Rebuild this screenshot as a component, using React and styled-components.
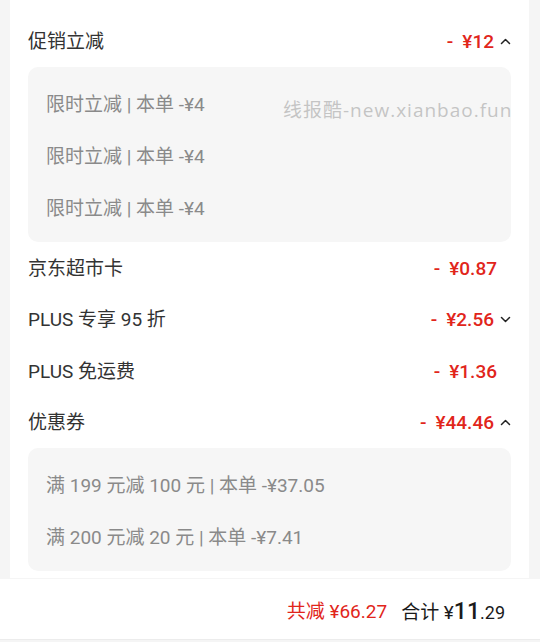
import React from "react"
import styled, { createGlobalStyle } from "styled-components"

const Global = createGlobalStyle`
  html, body { margin: 0; padding: 0; background: #f5f5f5; }
  body { font-family: Roboto, "Noto Sans CJK SC", sans-serif; }
`

const Page = styled.div`
  width: 540px;
  height: 642px;
  display: flex;
  flex-direction: column;
  background: #f5f5f5;
  position: relative;
  overflow: hidden;
`

const Card = styled.div`
  margin: 0 11px 0 10px;
  background: #fff;
  padding: 15px 18px 7px;
  display: flex;
  flex-direction: column;
`

const Row = styled.div`
  height: ${p => p.h || 51.5}px;
  flex-shrink: 0;
  display: flex;
  align-items: center;
  justify-content: space-between;
  padding-top: 1px;
  box-sizing: border-box;
`

const Label = styled.span`
  font-size: 19px;
  color: #333;
  line-height: 1;
`

const Amount = styled.span`
  display: flex;
  align-items: center;
  padding-right: ${p => (p.arrow ? 0 : 14)}px;
  font-size: 19px;
  font-weight: 500;
  color: #e1251b;
  line-height: 1;
  svg { margin-left: 6px; }
`

const Sign = styled.span`
  margin-right: 9px;
`

const Box = styled.div`
  background: #f6f6f6;
  border-radius: 10px;
  padding: 11px 18px 8px;
`

const Item = styled.div`
  height: 52px;
  display: flex;
  align-items: center;
  font-size: 19px;
  color: #8a8a8a;
  line-height: 1;
`

const Footer = styled.div`
  margin-top: auto;
  height: 61px;
  flex-shrink: 0;
  box-sizing: border-box;
  padding: 4px 35px 0 0;
  background: #fff;
  border-bottom: 1px solid #ececec;
  display: flex;
  align-items: center;
  justify-content: flex-end;
  gap: 14px;
  margin-bottom: 2px;
`

const Saved = styled.span`
  font-size: 19px;
  color: #e1251b;
  line-height: 1;
`

const Total = styled.span`
  font-size: 19px;
  color: #1a1a1a;
  line-height: 1;
  display: flex;
  align-items: baseline;
`

const Big = styled.span`
  font-size: 23px;
  font-weight: 500;
`

const Small = styled.span`
  font-size: 18px;
`

const Watermark = styled.div`
  position: absolute;
  left: 283px;
  top: 97px;
  font-family: "Open Sans", "Noto Sans CJK SC", sans-serif;
  font-size: 19px;
  letter-spacing: 1px;
  color: rgba(180, 180, 180, 0.75);
  line-height: 26px;
  pointer-events: none;
  white-space: nowrap;
`

const Chevron = ({ up }) => (
  <svg width="11" height="7" viewBox="0 0 11 7">
    <path
      d={up ? "M1.5 5.5 L5.5 1.5 L9.5 5.5" : "M1.5 1.5 L5.5 5.5 L9.5 1.5"}
      fill="none"
      stroke="#222"
      strokeWidth="1.5"
      strokeLinecap="round"
      strokeLinejoin="round"
    />
  </svg>
)

const Price = ({ value, arrow }) => (
  <Amount arrow={arrow}>
    <Sign>-</Sign>¥{value}
    {arrow && <Chevron up={arrow === "up"} />}
  </Amount>
)

const promo = ["限时立减 | 本单 -¥4", "限时立减 | 本单 -¥4", "限时立减 | 本单 -¥4"]
const coupons = ["满 199 元减 100 元 | 本单 -¥37.05", "满 200 元减 20 元 | 本单 -¥7.41"]

export default function App() {
  return (
    <Page>
      <Global />
      <Card>
        <Row h={52}>
          <Label>促销立减</Label>
          <Price value="12" arrow="up" />
        </Row>
        <Box>
          {promo.map((t, i) => <Item key={i}>{t}</Item>)}
        </Box>
        <Row>
          <Label>京东超市卡</Label>
          <Price value="0.87" />
        </Row>
        <Row>
          <Label>PLUS 专享 95 折</Label>
          <Price value="2.56" arrow="down" />
        </Row>
        <Row>
          <Label>PLUS 免运费</Label>
          <Price value="1.36" />
        </Row>
        <Row>
          <Label>优惠券</Label>
          <Price value="44.46" arrow="up" />
        </Row>
        <Box>
          {coupons.map((t, i) => <Item key={i}>{t}</Item>)}
        </Box>
      </Card>
      <Footer>
        <Saved>共减 ¥66.27</Saved>
        <Total>合计 ¥<Big>11</Big><Small>.29</Small></Total>
      </Footer>
      <Watermark>线报酷-new.xianbao.fun</Watermark>
    </Page>
  )
}
